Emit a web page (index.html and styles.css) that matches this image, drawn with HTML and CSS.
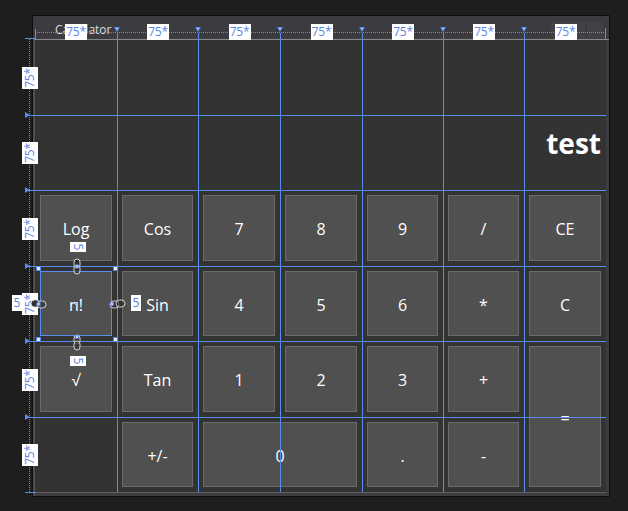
FILE: index.html
```html
<!DOCTYPE html>
<html>
<head>
<meta charset="utf-8">
<link rel="stylesheet" href="styles.css">
</head>
<body>
<div class="canvas">
  <div class="window">
    <div class="titlebar">
      <span class="title">Calculator</span>
      <div class="ctrls"><span></span><span></span><span></span></div>
    </div>
    <div class="client">
      <div class="grid">
        <div class="span-all"></div>
        <div class="span-all display">test</div>
        <div class="key">Log</div>
        <div class="key">Cos</div>
        <div class="key">7</div>
        <div class="key">8</div>
        <div class="key">9</div>
        <div class="key">/</div>
        <div class="key">CE</div>
        <div class="key sel">n!</div>
        <div class="key">Sin</div>
        <div class="key">4</div>
        <div class="key">5</div>
        <div class="key">6</div>
        <div class="key">*</div>
        <div class="key">C</div>
        <div class="key">√</div>
        <div class="key">Tan</div>
        <div class="key">1</div>
        <div class="key">2</div>
        <div class="key">3</div>
        <div class="key">+</div>
        <div class="key eq">=</div>
        <div class="blank"></div>
        <div class="key">+/-</div>
        <div class="key zero">0</div>
        <div class="key">.</div>
        <div class="key">-</div>
      </div>
    </div>
  </div>

  <div class="vdots"></div>

  <div class="cols">
    <div class="col"><span class="rlabel">75*</span></div>
    <div class="col"><span class="rlabel">75*</span></div>
    <div class="col"><span class="rlabel">75*</span></div>
    <div class="col"><span class="rlabel">75*</span></div>
    <div class="col"><span class="rlabel">75*</span></div>
    <div class="col"><span class="rlabel">75*</span></div>
    <div class="col"><span class="rlabel">75*</span></div>
  </div>

  <div class="rows">
    <div class="row"><span class="vlabel"><span>75*</span></span></div>
    <div class="row"><span class="vlabel"><span>75*</span></span></div>
    <div class="row"><span class="vlabel"><span>75*</span></span></div>
    <div class="row"><span class="vlabel"><span>75*</span></span></div>
    <div class="row"><span class="vlabel"><span>75*</span></span></div>
    <div class="row"><span class="vlabel"><span>75*</span></span></div>
  </div>

  <div class="tick tick-tl-h"></div>
  <div class="tick tick-tl-v"></div>
  <div class="tick tick-tr-v"></div>
  <div class="tick tick-bl-h"></div>

  <!-- selection adorners for n! -->
  <div class="handle h-tl"></div>
  <div class="handle h-tr"></div>
  <div class="handle h-bl"></div>
  <div class="handle h-br"></div>
  <div class="center-dot"></div>

  <svg class="chain chain-top" width="8" height="17" viewBox="0 0 8 17">
    <rect x="1" y="1" width="6" height="9" rx="3" fill="#2e2e2e" stroke="#d6d6d6"/>
    <rect x="1" y="7" width="6" height="9" rx="3" fill="#2e2e2e" fill-opacity="0.6" stroke="#d6d6d6"/>
    <rect x="2.5" y="7" width="3" height="3" fill="#b9d0ff" stroke="#5a8cf0" stroke-width="0.6"/>
  </svg>
  <svg class="chain chain-bottom" width="8" height="17" viewBox="0 0 8 17">
    <rect x="1" y="1" width="6" height="9" rx="3" fill="#2e2e2e" stroke="#d6d6d6"/>
    <rect x="1" y="7" width="6" height="9" rx="3" fill="#2e2e2e" fill-opacity="0.6" stroke="#d6d6d6"/>
    <rect x="2.5" y="1.5" width="3" height="3" fill="#b9d0ff" stroke="#5a8cf0" stroke-width="0.6"/>
  </svg>
  <svg class="chain chain-left" width="17" height="10" viewBox="0 0 17 10">
    <rect x="1" y="1" width="9" height="7" rx="3.5" fill="#2e2e2e" stroke="#d6d6d6"/>
    <rect x="7" y="2" width="9" height="7" rx="3.5" fill="#2e2e2e" fill-opacity="0.6" stroke="#d6d6d6"/>
    <rect x="7" y="3.5" width="3" height="3" fill="#b9d0ff" stroke="#5a8cf0" stroke-width="0.6"/>
  </svg>
  <svg class="chain chain-right" width="17" height="10" viewBox="0 0 17 10">
    <rect x="1" y="2" width="9" height="7" rx="3.5" fill="#2e2e2e" stroke="#d6d6d6"/>
    <rect x="7" y="1" width="9" height="7" rx="3.5" fill="#2e2e2e" fill-opacity="0.6" stroke="#d6d6d6"/>
    <rect x="1.5" y="3.5" width="3" height="3" fill="#b9d0ff" stroke="#5a8cf0" stroke-width="0.6"/>
  </svg>

  <div class="mlabel m-top"><span>5</span></div>
  <div class="mlabel m-bottom"><span>5</span></div>
  <div class="mlabel m-left">5</div>
  <div class="mlabel m-right">5</div>
</div>
</body>
</html>
```

FILE: styles.css
```css
body {
  margin: 0;
  background: #1e1e1e;
  font-family: "Open Sans", "Noto Sans", sans-serif;
}

.canvas {
  position: relative;
  width: 628px;
  height: 511px;
  padding: 15px 0 0 32px;
  box-sizing: border-box;
  overflow: hidden;
}

/* ---------- window ---------- */
.window {
  width: 578px;
  height: 482px;
  box-sizing: border-box;
  border: 1px solid #0d0d0d;
  background: #3c3c40;
  display: flex;
  flex-direction: column;
}

.titlebar {
  height: 23px;
  box-sizing: border-box;
  display: flex;
  justify-content: space-between;
  padding: 0 6px 0 22px;
}

.title {
  color: #dedede;
  font-size: 12px;
  line-height: 20px;
  padding-top: 4px;
}

.ctrls {
  display: flex;
  gap: 2px;
  align-self: flex-end;
  margin-bottom: 1px;
}

.ctrls span {
  width: 16px;
  height: 16px;
  background: #414146;
}

.client {
  border-top: 1px solid #8a8a8a;
  border-left: 2px solid #4f4f4f;
  padding: 0 3px 3px 0;
  background: #3d3d41;
}

.grid {
  width: 571px;
  height: 452px;
  border-bottom: 1px solid #5f5f5f;
  display: grid;
  grid-template-columns: 82px 81px 82px 82px 81px 81px 82px;
  grid-template-rows: 75px 75px 76px 75px 76px 75px;
  background: #333333;
}

.span-all {
  grid-column: 1 / -1;
}

.display {
  text-align: right;
  padding: 13px 5px 0 0;
  color: #ffffff;
  font-weight: 700;
  font-size: 28px;
  line-height: 30px;
}

.key {
  margin: 5px;
  box-sizing: border-box;
  background: #505050;
  border: 1px solid #6b6b6b;
  color: #ffffff;
  font-size: 16px;
  display: flex;
  align-items: center;
  justify-content: center;
  padding-top: 2px;
}

.key.sel {
  border-color: #5a8cf0;
}

.eq {
  grid-row: span 2;
}

.zero {
  grid-column: span 2;
}

/* ---------- grid adorners ---------- */
.cols {
  position: absolute;
  left: 35px;
  top: 32px;
  width: 571px;
  height: 460px;
  box-sizing: border-box;
  border-top: 1px dotted #5a8cf0;
  display: grid;
  grid-template-columns: 82px 81px 82px 82px 81px 81px 82px;
}

.col {
  position: relative;
}

.col + .col {
  border-left: 1px solid #5a8cf0;
}

.col + .col::before {
  content: "";
  position: absolute;
  top: -6px;
  left: -4px;
  border-left: 3.5px solid transparent;
  border-right: 3.5px solid transparent;
  border-top: 5px solid #5a8cf0;
}

.col + .col::after {
  content: "";
  position: absolute;
  top: -5px;
  left: -2px;
  border-left: 1.5px solid transparent;
  border-right: 1.5px solid transparent;
  border-top: 2px solid #cfdcff;
}

.rlabel {
  position: absolute;
  top: -9px;
  left: 50%;
  transform: translateX(-50%);
  width: 22px;
  height: 16px;
  background: #ffffff;
  color: #5a84e4;
  font-size: 12px;
  line-height: 16px;
  text-align: center;
  letter-spacing: -0.3px;
}

.vdots {
  position: absolute;
  left: 29px;
  top: 38px;
  height: 454px;
  border-left: 1px dotted #5a8cf0;
}

.rows {
  position: absolute;
  left: 25px;
  top: 40px;
  width: 581px;
  height: 452px;
  display: grid;
  grid-template-rows: 75px 75px 76px 75px 76px 75px;
}

.row {
  position: relative;
}

.row + .row {
  border-top: 1px solid #5a8cf0;
}

.row + .row::before {
  content: "";
  position: absolute;
  top: -4px;
  left: 0;
  border-top: 3.5px solid transparent;
  border-bottom: 3.5px solid transparent;
  border-left: 5px solid #5a8cf0;
}

.vlabel {
  position: absolute;
  left: -3px;
  top: 50%;
  transform: translateY(-50%);
  width: 16px;
  height: 22px;
  background: #ffffff;
  display: flex;
  align-items: center;
  justify-content: center;
}

.vlabel span {
  display: block;
  transform: rotate(-90deg);
  color: #5a84e4;
  font-size: 12px;
  line-height: 16px;
  white-space: nowrap;
  letter-spacing: -0.3px;
}

.tick {
  position: absolute;
  background: #5a8cf0;
}

.tick-tl-h { left: 25px; top: 38px; width: 11px; height: 1px; }
.tick-tl-v { left: 35px; top: 29px; width: 1px; height: 10px; }
.tick-tr-v { left: 605px; top: 28px; width: 1px; height: 11px; }
.tick-bl-h { left: 25px; top: 492px; width: 11px; height: 1px; }

/* ---------- selection adorners ---------- */
.handle {
  position: absolute;
  width: 3px;
  height: 3px;
  background: #dfe8ff;
  border: 1px solid #5a8cf0;
}

.h-tl { left: 36px; top: 266px; }
.h-tr { left: 113px; top: 266px; }
.h-bl { left: 36px; top: 337px; }
.h-br { left: 113px; top: 337px; }

.center-dot {
  position: absolute;
  left: 75px;
  top: 302px;
  width: 3px;
  height: 3px;
  background: #a9c4ff;
}

.chain {
  position: absolute;
  display: block;
}

.chain-top { left: 73px; top: 258px; }
.chain-bottom { left: 73px; top: 334px; }
.chain-left { left: 30px; top: 299px; }
.chain-right { left: 109px; top: 299px; }

.mlabel {
  position: absolute;
  background: #ffffff;
  color: #5a84e4;
  font-size: 12px;
  line-height: 16px;
  text-align: center;
  display: flex;
  align-items: center;
  justify-content: center;
}

.mlabel span {
  display: block;
  transform: rotate(90deg);
}

.m-top { left: 70px; top: 242px; width: 16px; height: 10px; }
.m-bottom { left: 70px; top: 356px; width: 16px; height: 10px; }
.m-left { left: 12px; top: 295px; width: 10px; height: 16px; }
.m-right { left: 131px; top: 295px; width: 10px; height: 16px; }
```
